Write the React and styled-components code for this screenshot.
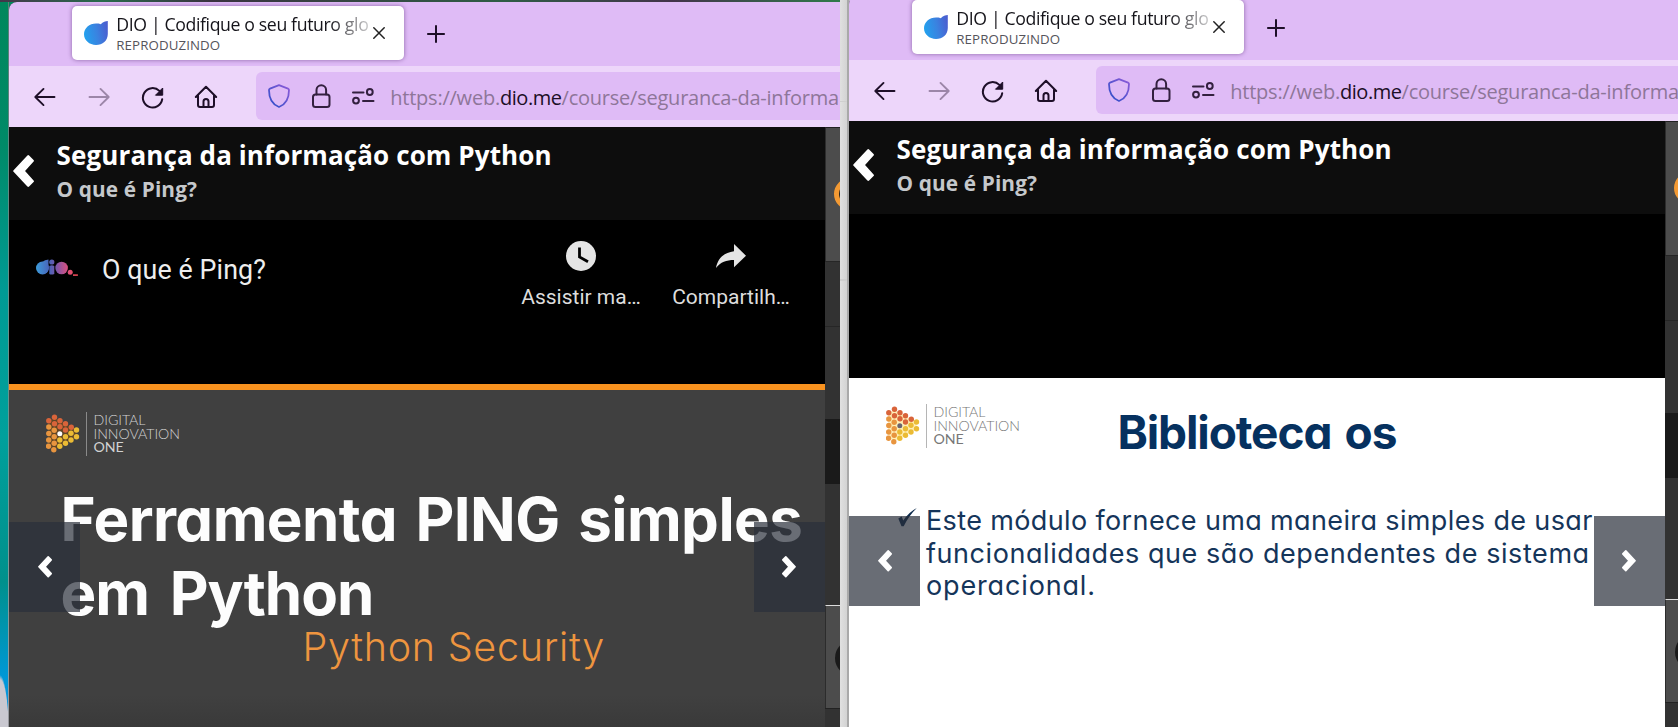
import React from "react";
import styled, { createGlobalStyle } from "styled-components";

const GlobalStyle = createGlobalStyle`
  * { box-sizing: border-box; }
  html, body { margin: 0; padding: 0; overflow: hidden; background: #d8d8d8; }
  h1, h2, p { margin: 0; font-weight: inherit; }
`;

const ui = `"Open Sans", "Noto Sans", sans-serif`;
const geometric = `Inter, Lato, sans-serif`;

const Desktop = styled.main`
  display: grid;
  grid-template-columns: 840px 838px;
  width: 1678px;
  height: 727px;
  overflow: hidden;
`;

const LeftPane = styled.section`
  height: 727px;
  padding: 2px 0 0 9px;
  overflow: hidden;
  background:
    linear-gradient(90deg, #43364a 0, #286b4c 12%, #3a3340 25%, #2f5c45 60%, #43334a 80%, #2f7a4a 100%) 0 0 / 100% 2px no-repeat,
    linear-gradient(#5a7f78, #6b9490 60%, #9a9aa0) 8px 2px / 1px 100% no-repeat,
    radial-gradient(ellipse 9px 60px at 0 735px, #c9c8d0 0 92%, transparent 100%),
    linear-gradient(#00875c 0, #008a68 20%, #009a94 40%, #00a09c 60%, #00908c 80%, #0095b8 88%, #0098dc 94%, #1a90d8 100%);
`;

const RightPane = styled.section`
  height: 727px;
  padding-left: 9px;
  overflow: hidden;
  background:
    linear-gradient(#a9a9a9, #a9a9a9) 7px 0 / 2px 100% no-repeat,
    linear-gradient(#cfcfcf, #cfcfcf) 0 101px / 7px 1px no-repeat,
    linear-gradient(#cfcfcf, #cfcfcf) 0 279px / 7px 2px no-repeat,
    linear-gradient(90deg, #e0e0e0, #cfcfcf) 0 0 / 9px 100% no-repeat;
`;

const Window = styled.article`
  display: flex;
  flex-direction: column;
  height: 731px;
  margin-top: ${(p) => p.$lift || 0}px;
  border-radius: 8px 0 0 0;
  overflow: hidden;
  background: #0d0d0d;
`;

const TabStrip = styled.div`
  display: flex;
  flex: none;
  height: 64px;
  padding: 4px 0 0 63px;
  background: #dfbbf6;
`;

const Tab = styled.div`
  display: flex;
  align-items: center;
  width: 332px;
  height: 54px;
  padding: 0 19px 0 12px;
  border-radius: 5px;
  background: #fff;
  box-shadow: 0 0 4px rgba(70, 30, 100, 0.55);
`;

const TabLabels = styled.div`
  height: 54px;
  margin: 0 auto 0 8.3px;
  padding-top: 7px;
  font-family: ${ui};
  white-space: nowrap;
`;

const TabTitle = styled.h1`
  font-size: 17.7px;
  line-height: 22px;
  letter-spacing: -0.38px;
  color: #15141a;
  -webkit-mask-image: linear-gradient(90deg, #000 213px, transparent 264px);
  mask-image: linear-gradient(90deg, #000 213px, transparent 264px);
`;

const TabStatus = styled.p`
  margin-top: 2px;
  font-size: 13.3px;
  line-height: 16px;
  letter-spacing: 0.1px;
  color: #55545b;
`;

const NewTab = styled.div`
  margin: 19px 0 0 23px;
  line-height: 0;
`;

const Toolbar = styled.div`
  display: flex;
  flex: none;
  align-items: center;
  gap: 27.7px;
  height: 61px;
  padding: 6px 0 7px 23px;
  background: #edd6fa;
`;

const AddressBar = styled.div`
  display: flex;
  flex: 1;
  align-items: center;
  gap: 18px;
  height: 48px;
  margin-left: 9.5px;
  padding-left: 11px;
  border-radius: 6px 0 0 6px;
  background: #dfbbf6;
  overflow: hidden;
  svg { flex: none; }
`;

const Url = styled.p`
  margin: 3px 0 0 -3px;
  font-family: ${ui};
  font-size: 20px;
  line-height: 28px;
  letter-spacing: -0.23px;
  white-space: nowrap;
  color: #8e7699;
  b { font-weight: 400; letter-spacing: -0.45px; color: #1c0f26; }
`;

const Page = styled.div`
  display: flex;
  flex: 1;
  min-height: 0;
`;

const Course = styled.div`
  display: flex;
  flex: none;
  flex-direction: column;
  position: relative;
  width: 816px;
`;

const CourseHeader = styled.header`
  display: flex;
  flex: none;
  align-items: flex-start;
  height: 93px;
  padding: 11px 0 0 4px;
  background: #0d0d0d;
  > svg { margin-top: 17px; }
`;

const CourseTitles = styled.div`
  margin-left: 22.6px;
  font-family: ${ui};
  font-weight: 700;
`;

const CourseTitle = styled.h1`
  font-size: 26px;
  line-height: 34px;
  letter-spacing: 0.11px;
  white-space: nowrap;
  color: #fff;
`;

const LessonTitle = styled.h2`
  margin-top: 2px;
  font-size: 20.8px;
  line-height: 30px;
  letter-spacing: 0.12px;
  color: #c5c8cb;
`;

const Player = styled.div`
  display: flex;
  flex: none;
  height: 164px;
  padding: 21px 19px 0 26px;
  background: #000;
  font-family: Roboto, sans-serif;
`;

const VideoTitle = styled.h2`
  flex: 1;
  margin: 13px 0 0 24px;
  font-size: 26.8px;
  line-height: 32px;
  letter-spacing: 0.1px;
  color: #eee;
`;

const Action = styled.div`
  display: flex;
  flex-direction: column;
  align-items: center;
  width: 150px;
  font-size: 21px;
  line-height: 26px;
  color: #ddd;
`;

const Slide = styled.div`
  flex: 1;
  overflow: hidden;
  font-family: ${geometric};
  font-feature-settings: "cv11" 1;
  border-top: ${(p) => (p.$dark ? "6px solid #f9921f" : "none")};
  background: ${(p) => (p.$dark ? "linear-gradient(#404040 0 305px, #393939 340px)" : "#fff")};
`;

const SlideTop = styled.div`
  display: flex;
  height: ${(p) => p.$h}px;
  padding: ${(p) => p.$top}px 0 0 37px;
`;

const Brand = styled.div`
  display: flex;
  color: ${(p) => p.$ink};
`;

const BrandName = styled.div`
  height: 44px;
  margin-left: 4.5px;
  padding: 1px 0 0 7px;
  border-left: 1px solid ${(p) => p.$rule};
  font-family: Lato, sans-serif;
  font-size: 14.2px;
  font-weight: 300;
  line-height: 13.6px;
  letter-spacing: -0.05px;
  white-space: nowrap;
  b { font-weight: 400; }
`;

const BigTitle = styled.h1`
  padding-left: 51.5px;
  font-size: 60px;
  font-weight: 700;
  line-height: 74px;
  white-space: nowrap;
  color: #fdfdfd;
`;

const TitleLine = styled.span`
  display: block;
  letter-spacing: ${(p) => p.$track}px;
  word-spacing: ${(p) => p.$gap}px;
`;

const SubTitle = styled.p`
  margin-top: -7px;
  padding-left: 293.5px;
  font-size: 39.5px;
  font-weight: 300;
  line-height: 48px;
  letter-spacing: 0.72px;
  white-space: nowrap;
  color: #ee953f;
`;

const SlideTitle = styled.h1`
  margin-left: 97.5px;
  font-size: 46px;
  font-weight: 700;
  line-height: 56px;
  letter-spacing: -1.1px;
  word-spacing: 3.5px;
  white-space: nowrap;
  color: #06315f;
`;

const Bullet = styled.div`
  display: flex;
  padding-left: 49px;
  color: #15355a;
`;

const BulletMark = styled.div`
  padding-top: 3px;
  line-height: 0;
`;

const BulletText = styled.div`
  margin-left: 9px;
  font-size: 27px;
  font-weight: 370;
  line-height: 32.6px;
  white-space: nowrap;
`;

const BulletLine = styled.p`
  letter-spacing: ${(p) => p.$track}px;
`;

const NavButton = styled.div`
  position: absolute;
  top: 395px;
  ${(p) => (p.$side === "left" ? "left: 0; padding-left: 29px;" : "right: 0; padding-left: 28px;")}
  display: flex;
  align-items: center;
  width: 71px;
  height: 90px;
  background: rgba(41, 47, 59, 0.7);
  svg { transform: ${(p) => (p.$side === "left" ? "none" : "scaleX(-1)")}; }
`;

const Sidebar = styled.aside`
  display: flex;
  flex: 1;
  flex-direction: column;
  min-width: 0;
  overflow: hidden;
`;

const SideBlock = styled.div`
  flex: none;
  height: ${(p) => p.$h}px;
  padding: ${(p) => p.$pad || 0}px 0 0 ${(p) => p.$x || 0}px;
  overflow: hidden;
  background: ${(p) => p.$bg};
  border-top: ${(p) => (p.$line ? `1px solid ${p.$line}` : "none")};
  border-left: ${(p) => (p.$edge ? "1px solid #2c2c2c" : "none")};
`;

const Disc = styled.div`
  width: ${(p) => p.$d}px;
  height: ${(p) => p.$d}px;
  border: ${(p) => p.$ring || "none"};
  border-radius: 50%;
  background: ${(p) => p.$bg};
`;

const Chevron = ({ w, h }) => (
  <svg width={w} height={h} viewBox="0 0 14 21.5">
    <path d="M.9 10.75 10.2 .9 13.2 3.9 7 10.75 13.2 17.6 10.2 20.6Z" fill="#fff" stroke="#fff" strokeWidth="1.6" strokeLinejoin="round" />
  </svg>
);

const Favicon = () => (
  <svg width="24" height="24" viewBox="0 0 24 24">
    <defs>
      <linearGradient id="drop" x1="0" x2="1" y1=".6" y2=".4">
        <stop offset="0" stopColor="#22a2ee" />
        <stop offset=".55" stopColor="#3a82e0" />
        <stop offset="1" stopColor="#4a5fd0" />
      </linearGradient>
    </defs>
    <path d="M23.800 0c-2.200 .1-5 .8-7 3.200C15.400 2.700 13.800 2.600 12 2.600 5.400 2.600 0 7.300 0 13.300S5.400 24 12 24s11.800-4.400 11.800-11Z" fill="url(#drop)" />
  </svg>
);

const stroke = { fill: "none", strokeWidth: 2, strokeLinecap: "round", strokeLinejoin: "round" };

const ArrowIcon = ({ color, flip }) => (
  <svg width="26" height="26" viewBox="0 0 26 26" transform={flip ? "scale(-1 1)" : undefined}>
    <path d="M22.500 14H3.600M11.500 5.900 3.300 14 11.500 22.100" stroke={color} {...stroke} strokeWidth="1.900" />
  </svg>
);

const ReloadIcon = () => (
  <svg width="26" height="26" viewBox="0 0 26 26">
    <path d="M23.200 16.200A9.700 9.700 0 1 1 20.400 7.900" stroke="#1e0f28" {...stroke} />
    <path d="M23.700 5v7.200h-7.200Z" fill="#1e0f28" stroke="#1e0f28" strokeWidth="1" strokeLinejoin="round" />
  </svg>
);

const HomeIcon = () => (
  <svg width="26" height="26" viewBox="0 0 26 26">
    <path d="M2.800 14 13 3.800 23.200 14M5 12.500V22q0 2 2 2h12q2 0 2-2V12.500M10.500 24v-5.500q0-2.500 2.500-2.500t2.500 2.500V24" stroke="#1e0f28" {...stroke} />
  </svg>
);

const ShieldIcon = () => (
  <svg width="24" height="26" viewBox="0 0 24 26">
    <defs>
      <linearGradient id="shield" x1="1" x2="0" y1="0" y2="1">
        <stop offset="0" stopColor="#8f5bd8" />
        <stop offset="1" stopColor="#2a4fc8" />
      </linearGradient>
    </defs>
    <path d="M12 2.200 21 5.600q1 .4 1 1.500C22 15 19 21.500 12 24 5 21.500 2 15 2 7.100q0-1.100 1-1.500Z" stroke="url(#shield)" {...stroke} strokeWidth="1.8" />
  </svg>
);

const LockIcon = () => (
  <svg width="24" height="26" viewBox="0 0 24 26">
    <rect x="4" y="11.500" width="16.500" height="12.500" rx="2.500" stroke="#33203f" {...stroke} />
    <path d="M7.500 11.500V7a4.800 4.800 0 0 1 9.600 0v4.500" stroke="#33203f" {...stroke} />
  </svg>
);

const PermissionsIcon = () => (
  <svg width="24" height="26" viewBox="0 0 24 26">
    <path d="M2 9.500h10.500M12 18h10.500" stroke="#33203f" {...stroke} />
    <circle cx="18.800" cy="9" r="2.900" stroke="#33203f" {...stroke} />
    <circle cx="5" cy="17.600" r="2.900" stroke="#33203f" {...stroke} />
  </svg>
);

const CloseIcon = () => (
  <svg width="12" height="12" viewBox="0 0 12 12">
    <path d="M.8 .8 11.200 11.200M11.200 .8 .8 11.200" stroke="#222" strokeWidth="1.500" strokeLinecap="round" />
  </svg>
);

const PlusIcon = () => (
  <svg width="18" height="18" viewBox="0 0 18 18">
    <path d="M9 .2v17.600M.2 9h17.600" stroke="#1e0f28" strokeWidth="2" />
  </svg>
);

const CheckIcon = () => (
  <svg width="19" height="19" viewBox="0 0 19 19">
    <path d="M.300 10.500 3.700 8.600l1.500 4Q11 4 18.800 0 11 7.500 5.700 18.200H3.500Z" fill="#0c2a4c" />
  </svg>
);

const ChannelLogo = () => (
  <svg width="43" height="43" viewBox="0 -3 43 43">
    <defs>
      <linearGradient id="channel" gradientUnits="userSpaceOnUse" x1="0" x2="42" y1="0" y2="0">
        <stop offset="0" stopColor="#3ba0dd" />
        <stop offset=".35" stopColor="#4a62b8" />
        <stop offset=".55" stopColor="#8a55a5" />
        <stop offset=".8" stopColor="#e0507a" />
        <stop offset="1" stopColor="#e8484f" />
      </linearGradient>
    </defs>
    <g fill="url(#channel)">
      <circle cx="7.500" cy="24" r="6.500" />
      <path d="M7.500 18q2-2.500 6-2.500V24q0 4-3 5.500Z" />
      <circle cx="16.800" cy="18" r="2.600" />
      <path d="M14.300 22q2.500-1.500 5 0v8q-3 1-5 0Z" />
      <circle cx="26.600" cy="24" r="6.300" />
      <circle cx="35.200" cy="28.300" r="2.500" />
      <path d="M38 30.300h4.900v1.600H38Z" />
    </g>
  </svg>
);

const ClockIcon = () => (
  <svg width="30" height="43" viewBox="0 0 30 43">
    <circle cx="15" cy="15" r="15" fill="#e4e4e4" />
    <path d="M13.500 6.500V16l8.500 4.800" fill="none" stroke="#000" strokeWidth="2.800" />
  </svg>
);

const ShareIcon = () => (
  <svg width="30" height="43" viewBox="0 0 30 43">
    <path d="M18 3v7.200C7.500 11.500 1.500 18 0 27c4.500-6 10.500-8 18-8v7.300L30 14.700Z" fill="#e4e4e4" />
  </svg>
);

const DOTS = {
  "#d9643a": [[9, 2.3], [3.300, 5.700], [14.500, 5.700], [9, 8.700], [20, 8.700], [14.500, 11.800], [25.800, 12.300], [20, 15]],
  "#e8953f": [[3.300, 12], [3.300, 18.500], [3.200, 25], [3, 31.300], [8.700, 15.300], [8.700, 21.700], [8.700, 28.300], [8.300, 34.700]],
  "#ebbb34": [[31, 15], [25.500, 18.300], [20, 21.700], [14.300, 25], [31, 21.700], [25.500, 25], [20, 28.300], [14.300, 31.300]],
};

const DotMark = ({ core, glow }) => (
  <svg width="35" height="44" viewBox="0.5 -3 35 44">
    <path d="M5 5 9 3 31 15v7L9 34 3 31V6Z" fill={glow} opacity=".55" />
    {Object.entries(DOTS).map(([color, dots]) =>
      dots.map(([x, y]) => <circle key={`${x}-${y}`} cx={x} cy={y} r="2.700" fill={color} />)
    )}
    <circle cx="14.300" cy="18.700" r="2.500" fill={core} />
  </svg>
);

const BrandLogo = ({ ink, rule, core, glow }) => (
  <Brand $ink={ink}>
    <DotMark core={core} glow={glow} />
    <BrandName $rule={rule}>
      DIGITAL<br />INNOVATION<br /><b>ONE</b>
    </BrandName>
  </Brand>
);

const BrowserWindow = ({ lift, player, children }) => (
  <Window $lift={lift}>
    <TabStrip>
      <Tab>
        <Favicon />
        <TabLabels>
          <TabTitle>DIO | Codifique o seu futuro glo</TabTitle>
          <TabStatus>REPRODUZINDO</TabStatus>
        </TabLabels>
        <CloseIcon />
      </Tab>
      <NewTab><PlusIcon /></NewTab>
    </TabStrip>
    <Toolbar>
      <ArrowIcon color="#1e0f28" />
      <ArrowIcon color="#9c86a8" flip />
      <ReloadIcon />
      <HomeIcon />
      <AddressBar>
        <ShieldIcon />
        <LockIcon />
        <PermissionsIcon />
        <Url>https://web.<b>dio.me</b>/course/seguranca-da-informa</Url>
      </AddressBar>
    </Toolbar>
    <Page>
      <Course>
        <CourseHeader>
          <Chevron w={21} h={32} />
          <CourseTitles>
            <CourseTitle>Segurança da informação com Python</CourseTitle>
            <LessonTitle>O que é Ping?</LessonTitle>
          </CourseTitles>
        </CourseHeader>
        <Player>{player}</Player>
        {children}
        <NavButton $side="left"><Chevron w={14} h={21.5} /></NavButton>
        <NavButton $side="right"><Chevron w={14} h={21.5} /></NavButton>
      </Course>
      <Sidebar>
        <SideBlock $h={134} $bg="#4c4c4c" $line="#222" $edge $pad={50} $x={8}>
          <Disc $d={32} $ring="5px solid #f39a34" $bg="#222" />
        </SideBlock>
        <SideBlock $h={65} $bg="#323232" $line="#262626" />
        <SideBlock $h={93} $bg="#323232" $line="#262626" />
        <SideBlock $h={65} $bg="#1a1a1a" />
        <SideBlock $h={121} $bg="#323232" />
        <SideBlock $h={103} $bg="#4c4c4c" $line="#ddd" $edge $pad={34} $x={9}>
          <Disc $d={36} $bg="#1a1a1a" />
        </SideBlock>
        <SideBlock $h={40} $bg="#323232" $line="#222" />
      </Sidebar>
    </Page>
  </Window>
);

export default function App() {
  return (
    <>
      <GlobalStyle />
      <Desktop>
        <LeftPane>
          <BrowserWindow
            player={
              <>
                <ChannelLogo />
                <VideoTitle>O que é Ping?</VideoTitle>
                <Action><ClockIcon />Assistir ma…</Action>
                <Action><ShareIcon />Compartilh…</Action>
              </>
            }
          >
            <Slide $dark>
              <SlideTop $h={92} $top={22}>
                <BrandLogo ink="#d2d2d2" rule="#8a8a8a" core="#fff" glow="#7a4a10" />
              </SlideTop>
              <BigTitle>
                <TitleLine $track={-0.55} $gap={4.8}>Ferramenta PING simples</TitleLine>
                <TitleLine $track={-1} $gap={7.5}>em Python</TitleLine>
              </BigTitle>
              <SubTitle>Python Security</SubTitle>
            </Slide>
          </BrowserWindow>
        </LeftPane>
        <RightPane>
          <BrowserWindow lift={-4}>
            <Slide>
              <SlideTop $h={127} $top={26}>
                <BrandLogo ink="#777" rule="#b5b5b5" core="#6a6470" glow="#ffe27a" />
                <SlideTitle>Biblioteca os</SlideTitle>
              </SlideTop>
              <Bullet>
                <BulletMark><CheckIcon /></BulletMark>
                <BulletText>
                  <BulletLine $track={0.37}>Este módulo fornece uma maneira simples de usar</BulletLine>
                  <BulletLine $track={0.57}>funcionalidades que são dependentes de sistema</BulletLine>
                  <BulletLine $track={0.85}>operacional.</BulletLine>
                </BulletText>
              </Bullet>
            </Slide>
          </BrowserWindow>
        </RightPane>
      </Desktop>
    </>
  );
}
